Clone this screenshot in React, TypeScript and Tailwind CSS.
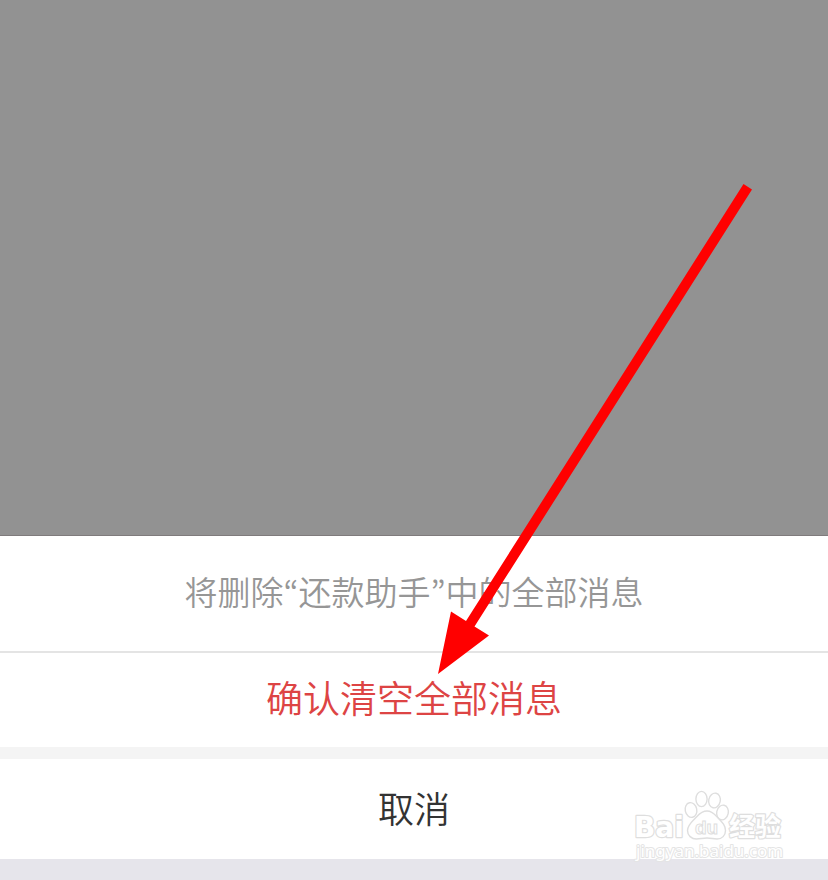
// App.tsx
function Arrow() {
  return (
    <svg
      className="pointer-events-none absolute bottom-[206px] left-1/2 ml-6 h-[490px] w-[315px]"
      viewBox="438 184 315 490"
      fill="#ff0000"
      aria-hidden="true"
    >
      <path d="M743.5 184 752 189.5 474.5 626.5 489 635.5 438 674 451 611.5 466 621Z" />
    </svg>
  )
}

function Watermark() {
  return (
    <svg
      className="pointer-events-none absolute right-10 bottom-4 h-[76px] w-[160px]"
      viewBox="628 788 160 76"
      fill="#fff"
      stroke="#dedede"
      strokeWidth="1.4"
      aria-hidden="true"
    >
      <g paintOrder="stroke" strokeWidth="2.4" strokeLinejoin="round">
        <text x="634" y="837" fontFamily="DejaVu Sans, sans-serif" fontWeight="700" fontSize="28">Bai</text>
        <text x="729" y="836" fontFamily="Noto Sans CJK SC, sans-serif" fontWeight="700" fontSize="26">经验</text>
        <text x="636" y="857" fontFamily="Noto Sans, sans-serif" fontSize="17" stroke="#e4e4e4" strokeWidth="2">jingyan.baidu.com</text>
      </g>
      <ellipse cx="691" cy="810" rx="5.8" ry="7.4" transform="rotate(-12 691 810)" />
      <ellipse cx="701.5" cy="799" rx="5.6" ry="7.6" />
      <ellipse cx="714.5" cy="800.5" rx="5.8" ry="7.4" transform="rotate(12 714.5 800.5)" />
      <ellipse cx="722.5" cy="812.5" rx="5.8" ry="7.4" transform="rotate(12 722.5 812.5)" />
      <path d="M707 811c-6 0-8.500 4-12 7.500-4 4-7.500 7-7.500 12 0 5 4 8.500 9 8.500 4 0 6-1 10.500-1s6 1 10 1c5 0 8.500-3.500 8.500-8.500 0-5-3-8-7-12-3.500-3.500-5.500-7.500-11.500-7.500Z" />
      <text x="695" y="834" fontFamily="Liberation Sans, sans-serif" fontWeight="700" fontSize="19" strokeWidth="1">du</text>
    </svg>
  )
}

export default function App() {
  return (
    <main className="relative flex min-h-screen flex-col justify-end overflow-hidden bg-[#929292] font-['Noto_Sans_CJK_SC',sans-serif]">
      <section className="border-t border-[#7f7b7c] bg-white text-center" role="dialog" aria-labelledby="sheet-title">
        <h1 id="sheet-title" className="flex h-[115px] items-center justify-center pb-1 text-[33px] font-[350] text-[#969696]">
          将删除
          <span className="font-['Noto_Sans_CJK_KR',sans-serif]">“</span>
          还款助手
          <span className="font-['Noto_Sans_CJK_KR',sans-serif]">”</span>
          中的全部消息
        </h1>
        <button type="button" className="block h-24 w-full border-t-2 border-[#e4e4e4] pb-1 text-[37px] font-[350] text-[#dd4444]">
          确认清空全部消息
        </button>
        <div className="h-3 bg-[#f4f4f4]" />
        <button type="button" className="block h-[100px] w-full pb-1 text-[36px] font-[350] text-[#333]">
          取消
        </button>
        <div className="h-[21px] bg-[#e6e5eb]" />
      </section>
      <Watermark />
      <Arrow />
    </main>
  )
}
